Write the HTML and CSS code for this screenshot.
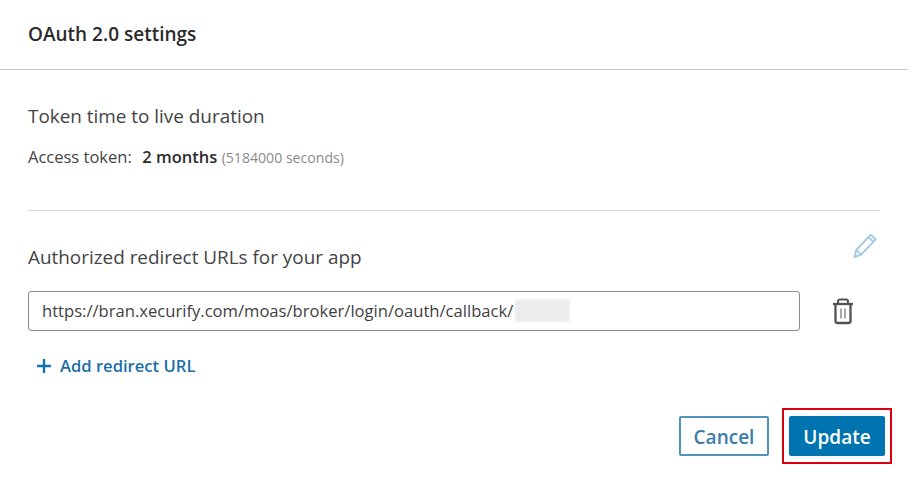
FILE: index.html
```html
<!DOCTYPE html>
<html lang="en">
<head>
<meta charset="utf-8">
<title>OAuth 2.0 settings</title>
<link rel="stylesheet" href="styles.css">
</head>
<body>
<main class="dialog">
  <header class="dialog-header"><h1 class="dialog-title">OAuth 2.0 settings</h1></header>
  <section class="ttl-section">
    <h2 class="section-title">Token time to live duration</h2>
    <p class="token-row">Access token:&nbsp; <strong class="token-value">2 months</strong> <span class="token-note">(5184000 seconds)</span></p>
  </section>
  <section class="redirect-section">
    <div class="redirect-head">
      <h2 class="section-title">Authorized redirect URLs for your app</h2>
      <svg class="icon-edit" width="26" height="28" viewBox="0 0 26 28" fill="none" stroke="#a3cbe1" stroke-width="1.9" stroke-linejoin="round"><path d="M2.500 26l1.700-7L18.600 3.800l5 4.600-14.400 15.200z"/><path d="M4.200 19l5 4.600M16.400 6.200l5 4.600"/></svg>
    </div>
    <div class="url-row">
      <div class="url-field">
        <span class="url-text">https://bran.xecurify.com/moas/broker/login/oauth/callback/</span><span class="url-mask"></span>
      </div>
      <svg class="icon-trash" width="22" height="28" viewBox="0 0 22 28" fill="none" stroke="#525252" stroke-width="2.300"><path d="M1 7h20"/><path d="M6 6.500V4.500q0-2 2-2h6q2 0 2 2v2" stroke-width="2"/><path d="M3.500 7v17a2 2 0 0 0 2 2h11a2 2 0 0 0 2-2V7"/><path d="M9 11.500v10M13 11.500v10" stroke-width="1.500" stroke="#8a8a8a"/></svg>
    </div>
    <button class="add-link" type="button">
      <svg width="16" height="16" viewBox="0 0 16 16" stroke="#0f73b1" stroke-width="2.400"><path d="M8 1v14M1 8h14"/></svg>
      <span>Add redirect URL</span>
    </button>
  </section>
  <footer class="dialog-actions">
    <button class="btn btn-secondary" type="button">Cancel</button>
    <span class="highlight"><button class="btn btn-primary" type="button">Update</button></span>
  </footer>
</main>
</body>
</html>
```
FILE: styles.css
```css
* { box-sizing: border-box; }
html, body { margin: 0; background: #fff; }
body { width: 908px; height: 477px; overflow: hidden; font-family: "Open Sans", "Noto Sans", sans-serif; color: #3b3b3b; }
.dialog { display: flex; flex-direction: column; height: 477px; }
.dialog-header { height: 70px; padding: 0 28px 2px; display: flex; align-items: center; border-bottom: 1px solid #c9c9c9; }
.dialog-title { margin: 0; font-size: 19px; font-weight: 600; color: #2b2b2b; }
.ttl-section { margin: 0 28px; height: 141px; padding-top: 33px; border-bottom: 1px solid #dcdcdc; }
.section-title { margin: 0; font-size: 18.900px; line-height: 26px; font-weight: 400; color: #444; }
.token-row { margin: 17px 0 0; font-size: 16.500px; line-height: 22px; color: #444; }
.token-value { margin-left: 2px; font-weight: 600; color: #2b2b2b; }
.token-note { font-size: 14.100px; color: #8a8a8a; }
.redirect-section { padding: 0 28px; }
.redirect-head { height: 80px; display: flex; justify-content: space-between; align-items: flex-end; padding-bottom: 21px; position: relative; }
.icon-edit { position: absolute; right: 2px; top: 20px; }
.url-row { display: flex; align-items: center; justify-content: space-between; padding-right: 26px; }
.url-field { width: 772px; height: 40px; border: 1px solid #8c8c8c; border-radius: 3px; padding: 0 13px 2px; display: flex; align-items: center; font-size: 16.600px; color: #3f3f3f; }
.url-text { white-space: nowrap; }
.url-mask { width: 55px; height: 23px; margin-left: 2px; background: #ececec; border-radius: 2px; filter: blur(1px); }
.add-link { margin-top: 23px; padding: 0 0 0 8px; border: 0; background: none; display: flex; align-items: center; gap: 8px; font: 600 16.600px "Open Sans", "Noto Sans", sans-serif; color: #1b6fa8; }
.dialog-actions { margin-top: auto; padding: 0 16px 13px 0; display: flex; justify-content: flex-end; align-items: center; gap: 13px; }
.highlight { display: flex; padding: 6px 5px; border: 2px solid #d9000d; }
.btn { height: 40px; padding: 2px 0 0; border-radius: 2px; font: 600 19px "Open Sans", "Noto Sans", sans-serif; }
.btn-secondary { width: 90px; background: #fff; border: 2px solid #4d93bb; color: #3a7ca8; }
.btn-primary { width: 96px; background: #0073b1; border: 0; color: #fff; }
```
